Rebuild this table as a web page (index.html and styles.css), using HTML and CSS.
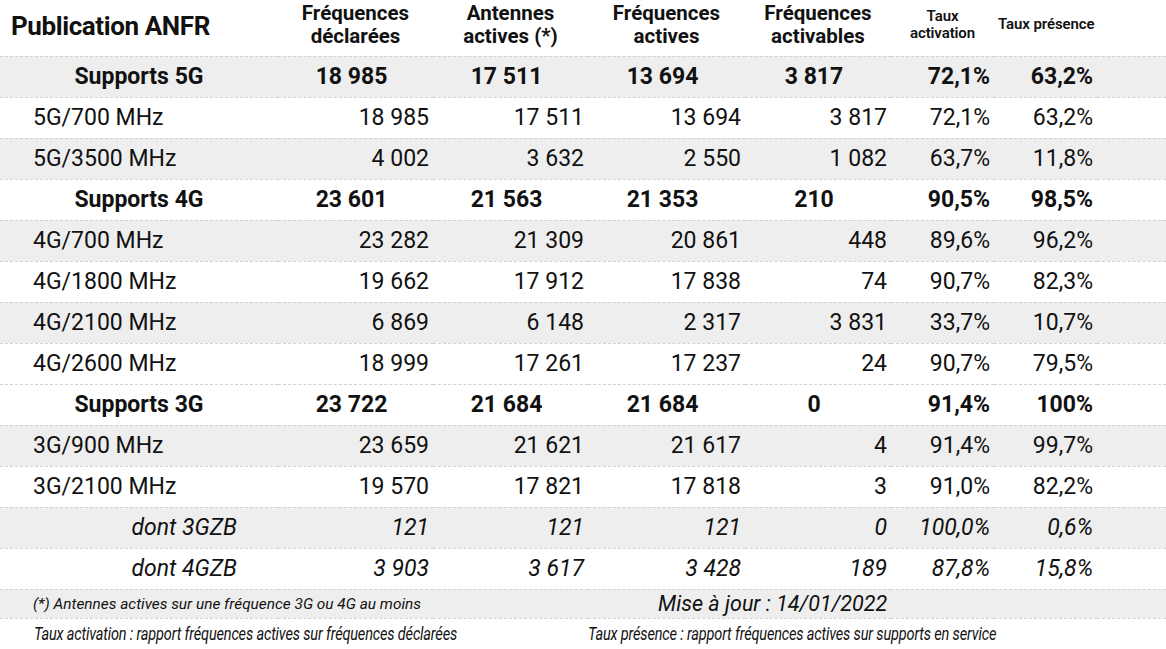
FILE: index.html
```html
<!DOCTYPE html>
<html lang="fr">
<head>
<meta charset="utf-8">
<title>Publication ANFR</title>
<link rel="stylesheet" href="styles.css">
</head>
<body>
<table class="grid">
  <colgroup>
    <col class="c-label"><col class="c-n1"><col class="c-n2"><col class="c-n3"><col class="c-n4"><col class="c-p1"><col class="c-p2"><col class="c-end">
  </colgroup>
  <thead>
    <tr class="head">
      <th class="title">Publication ANFR</th>
      <th class="h2l">Fréquences<br>déclarées</th>
      <th class="h2l">Antennes<br>actives (*)</th>
      <th class="h2l">Fréquences<br>actives</th>
      <th class="h2l">Fréquences<br>activables</th>
      <th class="hsmall">Taux<br>activation</th>
      <th class="hsmall one">Taux présence</th>
      <th></th>
    </tr>
  </thead>
  <tbody>
    <tr class="sum grey">
      <td class="glabel">Supports 5G</td><td>18 985</td><td>17 511</td><td>13 694</td><td>3 817</td><td class="pct">72,1%</td><td class="pct">63,2%</td><td></td>
    </tr>
    <tr class="row">
      <td class="label">5G/700 MHz</td><td>18 985</td><td>17 511</td><td>13 694</td><td>3 817</td><td>72,1%</td><td>63,2%</td><td></td>
    </tr>
    <tr class="row grey">
      <td class="label">5G/3500 MHz</td><td>4 002</td><td>3 632</td><td>2 550</td><td>1 082</td><td>63,7%</td><td>11,8%</td><td></td>
    </tr>
    <tr class="sum">
      <td class="glabel">Supports 4G</td><td>23 601</td><td>21 563</td><td>21 353</td><td>210</td><td class="pct">90,5%</td><td class="pct">98,5%</td><td></td>
    </tr>
    <tr class="row grey">
      <td class="label">4G/700 MHz</td><td>23 282</td><td>21 309</td><td>20 861</td><td>448</td><td>89,6%</td><td>96,2%</td><td></td>
    </tr>
    <tr class="row">
      <td class="label">4G/1800 MHz</td><td>19 662</td><td>17 912</td><td>17 838</td><td>74</td><td>90,7%</td><td>82,3%</td><td></td>
    </tr>
    <tr class="row grey">
      <td class="label">4G/2100 MHz</td><td>6 869</td><td>6 148</td><td>2 317</td><td>3 831</td><td>33,7%</td><td>10,7%</td><td></td>
    </tr>
    <tr class="row">
      <td class="label">4G/2600 MHz</td><td>18 999</td><td>17 261</td><td>17 237</td><td>24</td><td>90,7%</td><td>79,5%</td><td></td>
    </tr>
    <tr class="sum">
      <td class="glabel">Supports 3G</td><td>23 722</td><td>21 684</td><td>21 684</td><td>0</td><td class="pct">91,4%</td><td class="pct">100%</td><td></td>
    </tr>
    <tr class="row grey">
      <td class="label">3G/900 MHz</td><td>23 659</td><td>21 621</td><td>21 617</td><td>4</td><td>91,4%</td><td>99,7%</td><td></td>
    </tr>
    <tr class="row">
      <td class="label">3G/2100 MHz</td><td>19 570</td><td>17 821</td><td>17 818</td><td>3</td><td>91,0%</td><td>82,2%</td><td></td>
    </tr>
    <tr class="row ital grey">
      <td class="ilabel">dont 3GZB</td><td>121</td><td>121</td><td>121</td><td>0</td><td>100,0%</td><td>0,6%</td><td></td>
    </tr>
    <tr class="row ital">
      <td class="ilabel">dont 4GZB</td><td>3 903</td><td>3 617</td><td>3 428</td><td>189</td><td>87,8%</td><td>15,8%</td><td></td>
    </tr>
    <tr class="note grey">
      <td colspan="3" class="fnote">(*) Antennes actives sur une fréquence 3G ou 4G au moins</td>
      <td colspan="3" class="update">Mise à jour : 14/01/2022</td>
      <td colspan="2"></td>
    </tr>
    <tr class="legend">
      <td colspan="3" class="leg1"><span class="narrow">Taux activation : rapport fréquences actives sur fréquences déclarées</span></td>
      <td colspan="5" class="leg2"><span class="narrow">Taux présence : rapport fréquences actives sur supports en service</span></td>
    </tr>
  </tbody>
</table>
</body>
</html>
```

FILE: styles.css
```css
html, body {
  margin: 0;
  padding: 0;
  background: #ffffff;
}

body {
  font-family: Roboto, "Liberation Sans", sans-serif;
  color: #111111;
  width: 1166px;
  height: 649px;
  overflow: hidden;
}

.grid {
  width: 1166px;
  border-collapse: collapse;
  table-layout: fixed;
}

.c-label { width: 278px; }
.c-n1 { width: 155px; }
.c-n2 { width: 155px; }
.c-n3 { width: 157px; }
.c-n4 { width: 146px; }
.c-p1 { width: 103px; }
.c-p2 { width: 103px; }
.c-end { width: 69px; }

.grid td, .grid th {
  padding: 0 4px;
  white-space: nowrap;
}

.head {
  height: 56px;
  border-bottom: 1px dashed #d2d2d2;
}

.head th {
  vertical-align: top;
  font-weight: 700;
  color: #111;
}

.title {
  text-align: left;
  padding-left: 11px !important;
  padding-top: 11px !important;
  font-size: 26px;
  line-height: 30px;
  letter-spacing: -0.4px;
}

.h2l {
  font-size: 20.5px;
  line-height: 23px;
  padding-top: 2px !important;
  letter-spacing: 0;
}

.hsmall {
  font-size: 15px;
  line-height: 17px;
  padding-top: 8px !important;
  letter-spacing: -0.1px;
  font-weight: 600 !important;
}

.hsmall.one {
  padding-top: 16px !important;
  padding-right: 10px !important;
}

.row, .sum {
  height: 41px;
  border-bottom: 1px dashed #d2d2d2;
  font-size: 23px;
}

.grey {
  background: #eeeeee;
}

.row td {
  text-align: right;
}

.sum td {
  text-align: center;
  font-weight: 700;
  padding: 0 8px 0 0;
}

.sum td.pct {
  text-align: right;
  padding: 0 4px;
}

.row td.label {
  text-align: left;
  padding-left: 33px;
}

.sum td.glabel {
  text-align: center;
  padding: 0 4px;
}

.ital td {
  font-style: italic;
}

.row td.ilabel {
  text-align: right;
  padding-right: 41px;
}

.note {
  height: 29px;
  border-bottom: 1px dashed #d2d2d2;
}

.fnote {
  font-style: italic;
  font-size: 15.4px;
  padding-left: 33px !important;
  text-align: left;
}

.update {
  font-style: italic;
  font-size: 21.5px;
  text-align: left;
  padding-left: 70px !important;
}

.legend {
  height: 31px;
}

.legend td {
  text-align: left;
  vertical-align: middle;
  font-style: italic;
  font-size: 17.5px;
}

.leg1 {
  padding-left: 34px !important;
}

.leg2 {
  padding-left: 0 !important;
}

.narrow {
  display: inline-block;
  transform: scaleX(0.83);
  transform-origin: left center;
  letter-spacing: -0.2px;
}
```
